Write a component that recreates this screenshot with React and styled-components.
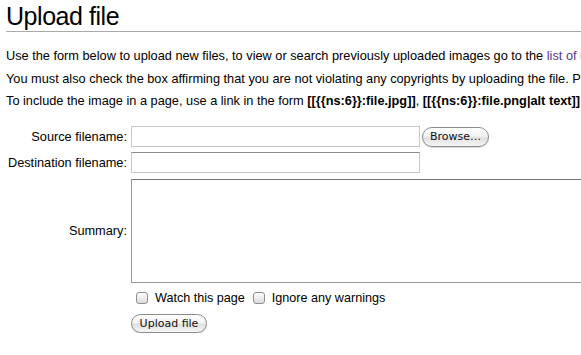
import React from 'react';
import styled, { createGlobalStyle } from 'styled-components';

const GlobalStyle = createGlobalStyle`
  html, body {
    margin: 0;
    padding: 0;
    background: #fff;
    overflow: hidden;
  }

  body {
    font-family: "Liberation Sans", Arial, sans-serif;
    color: #000;
  }
`;

const Page = styled.div`
  padding: 3px 0 0 6px;
  width: 575px;
  overflow: hidden;
`;

const Title = styled.h1`
  margin: 0 0 15px;
  padding-bottom: 2px;
  font-size: 25px;
  letter-spacing: -0.45px;
  font-weight: normal;
  line-height: 26px;
  border-bottom: 1px solid #aaa;
`;

const Para = styled.p`
  margin: 0 0 4.5px;
  font-size: 12.75px;
  line-height: 18px;
  white-space: nowrap;

  a {
    color: #5a3696;
    text-decoration: none;
  }

  b {
    font-weight: bold;
  }
`;

const Form = styled.form`
  display: grid;
  grid-template-columns: 121px auto;
  column-gap: 4px;
  row-gap: 5px;
  margin-top: 16px;
  align-items: center;
`;

const Label = styled.label`
  font-size: 12.75px;
  text-align: right;
  white-space: nowrap;
`;

const Field = styled.div`
  display: flex;
  align-items: center;
  gap: 2px;
`;

const TextInput = styled.input`
  box-sizing: border-box;
  width: 289px;
  height: 21px;
  margin: 0;
  border: 1px solid #c8c8c8;
  border-top-color: ${(p) => (p.$dark ? '#8a8a8a' : '#c8c8c8')};
  background: #fff;
`;

const Summary = styled.textarea`
  box-sizing: border-box;
  width: 480px;
  height: 104px;
  margin: 1px 0 0;
  border: 1px solid #999;
  border-top-color: #777;
  resize: none;
`;

const PillButton = styled.button`
  box-sizing: border-box;
  width: ${(p) => p.$width}px;
  height: ${(p) => p.$height}px;
  padding: 0;
  border: 1px solid #8c8c8c;
  border-radius: 10px;
  background: linear-gradient(#ffffff 0%, #f3f3f3 45%, #e0e0e0 55%, #f6f6f6 100%);
  box-shadow: 0 1px 1px rgba(0, 0, 0, 0.15);
  font-family: "DejaVu Sans", sans-serif;
  font-size: 11px;
  color: #111;
`;

const Options = styled.div`
  grid-column: 2;
  display: flex;
  align-items: center;
  padding: 3px 0 0 5px;
  font-size: 12.6px;
`;

const Option = styled.label`
  display: flex;
  align-items: center;
  gap: 7px;
  margin-right: 8px;
`;

const Box = styled.input`
  appearance: none;
  box-sizing: border-box;
  width: 12px;
  height: 12px;
  margin: 0;
  border: 1px solid #8e8e8e;
  border-radius: 3px;
  background: linear-gradient(#fdfdfd, #dcdcdc);
`;

const Actions = styled.div`
  grid-column: 2;
  padding-top: 3px;
`;

export default function App() {
  return (
    <>
      <GlobalStyle />
      <Page>
        <Title>Upload file</Title>
        <Para>
          Use the form below to upload new files, to view or search previously uploaded images go to the{' '}
          <a href="#list">list of uploaded files</a>, uploads and deletions are also logged in the upload log.
        </Para>
        <Para>
          You must also check the box affirming that you are not violating any copyrights by uploading the file. Press the button below to finish.
        </Para>
        <Para>
          To include the image in a page, use a link in the form <b>[[{'{{'}ns:6{'}}'}:file.jpg]]</b>,{' '}
          <b>[[{'{{'}ns:6{'}}'}:file.png|alt text]]</b> or <b>[[media:file.ogg]]</b> for directly linking to the file.
        </Para>
        <Form>
          <Label>Source filename:</Label>
          <Field>
            <TextInput type="text" />
            <PillButton type="button" $width={67} $height={20}>Browse…</PillButton>
          </Field>
          <Label>Destination filename:</Label>
          <Field>
            <TextInput type="text" $dark />
          </Field>
          <Label>Summary:</Label>
          <Summary />
          <Options>
            <Option>
              <Box type="checkbox" />
              Watch this page
            </Option>
            <Option>
              <Box type="checkbox" />
              Ignore any warnings
            </Option>
          </Options>
          <Actions>
            <PillButton type="button" $width={76} $height={19}>Upload file</PillButton>
          </Actions>
        </Form>
      </Page>
    </>
  );
}
